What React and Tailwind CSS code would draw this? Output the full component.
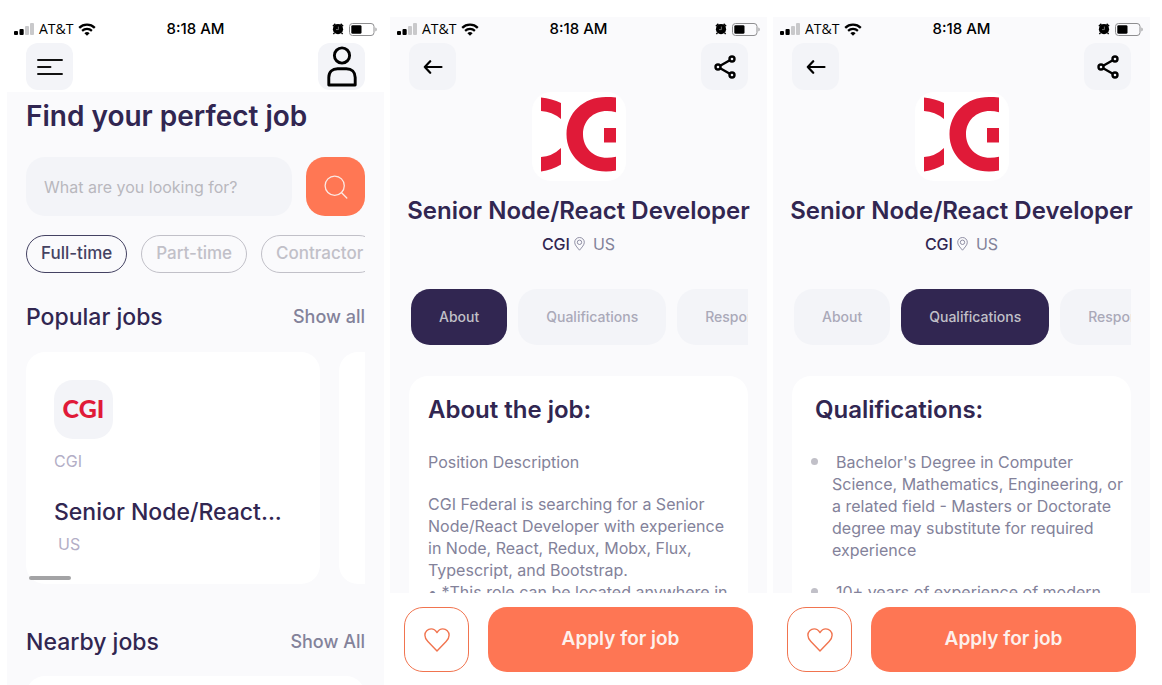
import React from "react";

const sans = "font-['Inter','Liberation_Sans',sans-serif]";

function SignalIcon() {
  return (
    <svg width="20" height="12" viewBox="0 0 20 12" aria-hidden="true">
      <rect x="0" y="8" width="4" height="4" rx="1" fill="#000" />
      <rect x="5.5" y="6" width="4.2" height="6" rx="1" fill="#000" />
      <rect x="11" y="3" width="4" height="9" rx="1" fill="#c9c9cb" />
      <rect x="16" y="0" width="4" height="12" rx="1" fill="#c9c9cb" />
    </svg>
  );
}

function WifiIcon() {
  return (
    <svg width="18" height="13" viewBox="0 0 18 13" aria-hidden="true">
      <path d="M1.2 4.8a11.3 11.3 0 0 1 15.6 0" fill="none" stroke="#000" strokeWidth="2.3" />
      <path d="M4.1 7.9a7.1 7.1 0 0 1 9.8 0" fill="none" stroke="#000" strokeWidth="2.2" />
      <path d="M6.4 10.2a3.8 3.8 0 0 1 5.2 0L9 12.8Z" fill="#000" />
    </svg>
  );
}

function AlarmIcon() {
  return (
    <svg width="12" height="12" viewBox="0 0 12 12" aria-hidden="true">
      <circle cx="6" cy="6.2" r="5.1" fill="#000" />
      <path d="M.9 3.2 3.4.9M11.1 3.2 8.6.9" stroke="#000" strokeWidth="1.5" />
      <path d="m2.4 9.8-1 1.4M9.6 9.8l1 1.4" stroke="#000" strokeWidth="1.4" />
      <path d="M6.4 3.6v3H4" fill="none" stroke="#888" strokeWidth=".8" />
    </svg>
  );
}

function BatteryIcon() {
  return (
    <svg width="28" height="13" viewBox="0 0 28 13" aria-hidden="true">
      <rect x=".5" y=".5" width="24.5" height="12" rx="3" fill="none" stroke="#8e8e90" />
      <rect x="2.3" y="2.2" width="10.2" height="8.6" rx="1.4" fill="#000" />
      <path d="M26.4 4.6v3.8c.9-.3 1.3-1 1.3-1.9s-.4-1.6-1.3-1.9Z" fill="#a0a0a2" />
    </svg>
  );
}

function MenuIcon() {
  return (
    <svg width="26" height="18" viewBox="0 0 26 18" fill="none" stroke="#111" strokeWidth="1.9" strokeLinecap="round" aria-hidden="true">
      <path d="M1 2h24M1 9h12.5M1 16h24" />
    </svg>
  );
}

function UserIcon() {
  return (
    <svg width="30" height="41" viewBox="0 0 30 41" fill="none" stroke="#000" strokeWidth="2.9" aria-hidden="true">
      <circle cx="15" cy="9.5" r="7.6" />
      <path d="M1.8 39V31.5c0-5.3 3.6-8.8 8.8-8.8h8.8c5.2 0 8.8 3.5 8.8 8.8V39Z" strokeLinejoin="round" />
    </svg>
  );
}

function BackIcon() {
  return (
    <svg width="20" height="14" viewBox="0 0 20 14" fill="none" stroke="#000" strokeWidth="2.2" strokeLinecap="round" strokeLinejoin="round" aria-hidden="true">
      <path d="M18.500 7H1.800M7.200 1.200 1.800 7l5.400 5.800" />
    </svg>
  );
}

function ShareIcon() {
  return (
    <svg width="22" height="24" viewBox="0 0 22 24" fill="none" stroke="#000" strokeWidth="2.4" aria-hidden="true">
      <circle cx="18" cy="4" r="2.5" />
      <circle cx="4" cy="12" r="2.5" />
      <circle cx="18" cy="20" r="2.5" />
      <path d="M6.2 10.7 15.800 5.300M6.200 13.300l9.600 5.400" />
    </svg>
  );
}

function SearchIcon() {
  return (
    <svg width="24" height="24" viewBox="0 0 24 24" fill="none" stroke="#fbe9e4" strokeWidth="1.3" strokeLinecap="round" aria-hidden="true">
      <circle cx="10.7" cy="10.7" r="9.6" />
      <path d="m17.6 17.8 5.2 5.2" />
    </svg>
  );
}

function HeartIcon() {
  return (
    <svg width="26" height="24" viewBox="0 0 26 24" fill="none" stroke="#f1744f" strokeWidth="1.4" strokeLinejoin="round" aria-hidden="true">
      <path d="M13 4.6C11.4 2 9.4.9 7.2.9 3.6.9.9 3.6.9 7.2c0 2.400 1.100 4.300 3 6.300L13 23l9.100-9.500c1.900-2 3-3.900 3-6.300 0-3.600-2.700-6.300-6.300-6.300-2.200 0-4.200 1.100-5.800 3.700Z" />
    </svg>
  );
}

function PinIcon() {
  return (
    <svg width="11" height="14" viewBox="0 0 11 14" fill="none" stroke="#83829a" strokeWidth=".9" aria-hidden="true">
      <path d="M5.500 13.200C3 10.200.7 7.900.7 5.300a4.800 4.800 0 0 1 9.600 0c0 2.600-2.300 4.900-4.800 7.900Z" />
      <circle cx="5.500" cy="5.300" r="2.200" />
    </svg>
  );
}

function CompanyMark() {
  return (
    <svg width="75" height="75" viewBox="0 0 75 75" role="img" aria-label="CGI logo" fill="#e01a38">
      <path d="M0 .5Q11 1.800 20 6v16Q11 14.500 0 14ZM0 60q11-.5 20-9v16.500Q11 73 0 74.500Z" />
      <path fillRule="evenodd" d="M75 .6A40 37.200 0 0 0 65 0C42.500 0 25.500 16 25.500 37.200S42.500 74.500 65 74.500q5 0 10-.9V59.700q-4.500 1-9 1C52 60.700 42 50.500 42 37.200S52 14 66 14q4.500 0 9 1.200Z" />
      <path d="M63 31h12v14.500H63Z" />
    </svg>
  );
}

function StatusBar() {
  return (
    <div className="grid h-6 shrink-0 grid-cols-[1fr_auto_1fr] items-center px-[7px]">
      <div className="flex items-center gap-[5px]">
        <SignalIcon />
        <span className="font-['Open_Sans','Liberation_Sans',sans-serif] text-sm leading-5 text-black">AT&amp;T</span>
        <WifiIcon />
      </div>
      <span className="text-[15px] leading-5 font-medium text-black">8:18 AM</span>
      <div className="flex items-center justify-end gap-[5px]">
        <AlarmIcon />
        <BatteryIcon />
      </div>
    </div>
  );
}

function IconButton({ label, children }) {
  return (
    <button type="button" aria-label={label} className="flex size-[47px] items-center justify-center rounded-xl bg-[#f3f4f8]">
      {children}
    </button>
  );
}

function SectionHeader({ title, action }) {
  return (
    <div className="flex h-8 items-center justify-between">
      <h2 className="text-[23px] leading-8 font-medium text-[#312651]">{title}</h2>
      <a href="#jobs" className="text-lg leading-8 font-medium text-[#83829a]">{action}</a>
    </div>
  );
}

const jobTypes = [
  { label: "Full-time", active: true },
  { label: "Part-time", active: false },
  { label: "Contractor", active: false },
];

function HomeScreen() {
  return (
    <section aria-label="Home" className="flex min-w-0 flex-col overflow-hidden">
      <StatusBar />
      <header className="flex h-[51px] shrink-0 items-start justify-between px-[19px] pt-[2px]">
        <IconButton label="Menu"><MenuIcon /></IconButton>
        <IconButton label="Profile"><UserIcon /></IconButton>
      </header>
      <div className="flex min-h-0 flex-1 flex-col overflow-hidden bg-[#fafafc] px-[19px]">
        <h1 className="mt-1 shrink-0 text-[28px] leading-10 font-semibold whitespace-nowrap text-[#312651]">Find your perfect job</h1>
        <form className="mt-[21px] flex shrink-0 gap-[14px]">
          <input
            type="text"
            aria-label="Job search"
            placeholder="What are you looking for?"
            className="h-[59px] min-w-0 flex-1 rounded-[19px] bg-[#f3f4f8] px-[18px] text-base text-[#312651] placeholder:text-[#b9b8be]"
          />
          <button type="button" aria-label="Search" className="flex size-[59px] shrink-0 items-center justify-center rounded-[19px] bg-[#ff7754]">
            <SearchIcon />
          </button>
        </form>
        <div className="mt-[19px] flex shrink-0 gap-[14px] overflow-hidden">
          {jobTypes.map((type) => (
            <button
              key={type.label}
              type="button"
              className={
                type.active
                  ? "h-[38px] shrink-0 rounded-[19px] border border-[#444262] px-[14px] text-[17px] font-medium text-[#444262]"
                  : "h-[38px] shrink-0 rounded-[19px] border border-[#c1c0c8] px-[14px] text-[17px] font-medium text-[#c1c0c8]"
              }
            >
              {type.label}
            </button>
          ))}
        </div>
        <div className="mt-7 shrink-0"><SectionHeader title="Popular jobs" action="Show all" /></div>
        <div className="relative mt-[19px] flex shrink-0 gap-[19px] overflow-hidden">
          <article className="h-[232px] w-[294px] shrink-0 rounded-[19px] bg-white px-7 pt-7">
            <div className="flex size-[59px] items-center justify-center rounded-[19px] bg-[#f3f4f8] pb-[3px] font-['Lato','Liberation_Sans',sans-serif] text-[25px] leading-6 font-black text-[#e01a38]">
              CGI
            </div>
            <p className="mt-[10px] text-base leading-6 text-[#b3aec6]">CGI</p>
            <h3 className="mt-[23px] text-[23px] leading-8 font-medium whitespace-nowrap text-[#312651]">Senior Node/React...</h3>
            <p className="mt-1 pl-1 text-base leading-6 text-[#b3aec6]">US</p>
          </article>
          <article className="h-[232px] w-[294px] shrink-0 rounded-[19px] bg-white" />
          <div className="absolute bottom-1 left-[3px] h-1 w-[42px] rounded-full bg-[#a3a3a5]" />
        </div>
        <div className="mt-[42px] shrink-0"><SectionHeader title="Nearby jobs" action="Show All" /></div>
        <article className="mt-[18px] h-20 shrink-0 rounded-[19px] bg-white" />
      </div>
    </section>
  );
}

const tabs = ["About", "Qualifications", "Responsibilities"];

function DetailScreen({ label, activeTab, children }) {
  return (
    <section aria-label={label} className="flex min-w-0 flex-col overflow-hidden bg-[#fafafc]">
      <StatusBar />
      <header className="flex h-[51px] shrink-0 items-start justify-between px-[19px] pt-[2px]">
        <IconButton label="Back"><BackIcon /></IconButton>
        <IconButton label="Share"><ShareIcon /></IconButton>
      </header>
      <div className="flex min-h-0 flex-1 flex-col overflow-hidden px-[19px]">
        <div className="flex h-[89px] w-[94px] shrink-0 items-start justify-center self-center rounded-[19px] bg-white pt-[5px]">
          <CompanyMark />
        </div>
        <h1 className="mt-[14px] shrink-0 self-center text-2xl leading-8 font-semibold whitespace-nowrap text-[#312651]">
          Senior Node/React Developer
        </h1>
        <div className="mt-[5px] flex shrink-0 items-center justify-center gap-1 text-base leading-6">
          <span className="font-medium text-[#312651]">CGI</span>
          <PinIcon />
          <span className="pl-1 text-[#83829a]">US</span>
        </div>
        <nav aria-label="Job sections" className="mt-[33px] flex shrink-0 gap-[11px] overflow-hidden pl-[2px]">
          {tabs.map((tab) => (
            <button
              key={tab}
              type="button"
              aria-pressed={tab === activeTab}
              className={
                tab === activeTab
                  ? "h-14 shrink-0 rounded-[19px] bg-[#312651] px-7 text-sm font-medium text-[#c1c0c8]"
                  : "h-14 shrink-0 rounded-[19px] bg-[#f3f4f8] px-7 text-sm font-medium text-[#aaa9b8]"
              }
            >
              {tab}
            </button>
          ))}
        </nav>
        <div className="mt-[31px] h-96 shrink-0 rounded-[19px] bg-white px-[19px] pt-[18px]">{children}</div>
      </div>
      <footer className="flex h-[92px] shrink-0 items-start gap-[19px] bg-white px-[14px] pt-[14px]">
        <button type="button" aria-label="Save job" className="flex size-[65px] shrink-0 items-center justify-center rounded-[19px] border border-[#f1744f]">
          <HeartIcon />
        </button>
        <button type="button" className="h-[65px] flex-1 rounded-[19px] bg-[#fe7654] text-[19px] font-semibold text-[#fdf0ec]">
          Apply for job
        </button>
      </footer>
    </section>
  );
}

const qualifications = [
  "Bachelor's Degree in Computer Science, Mathematics, Engineering, or a related field - Masters or Doctorate degree may substitute for required experience",
  "10+ years of experience of modern",
];

export default function App() {
  return (
    <main className={`${sans} grid h-screen grid-cols-3 gap-[6px] bg-white pt-[17px] pr-3 pl-[7px]`}>
      <HomeScreen />
      <DetailScreen label="About the job" activeTab="About">
        <h2 className="text-2xl leading-8 font-semibold text-[#312651]">About the job:</h2>
        <div className="mt-[25px] text-base leading-[22px] text-[#83829a]">
          <p>Position Description</p>
          <p className="mt-5">
            CGI Federal is searching for a Senior Node/React Developer with experience in Node, React, Redux, Mobx, Flux, Typescript, and Bootstrap.
          </p>
          <p>• *This role can be located anywhere in</p>
        </div>
      </DetailScreen>
      <DetailScreen label="Job qualifications" activeTab="Qualifications">
        <h2 className="pl-1 text-2xl leading-8 font-semibold text-[#312651]">Qualifications:</h2>
        <ul className="mt-[25px] flex flex-col gap-5 text-base leading-[22px] text-[#83829a]">
          {qualifications.map((item) => (
            <li key={item} className="-mr-4 flex gap-[14px]">
              <span className="mt-[7px] size-[7px] shrink-0 rounded-full bg-[#c1c0c8]" />
              <p className="indent-1">{item}</p>
            </li>
          ))}
        </ul>
      </DetailScreen>
    </main>
  );
}
